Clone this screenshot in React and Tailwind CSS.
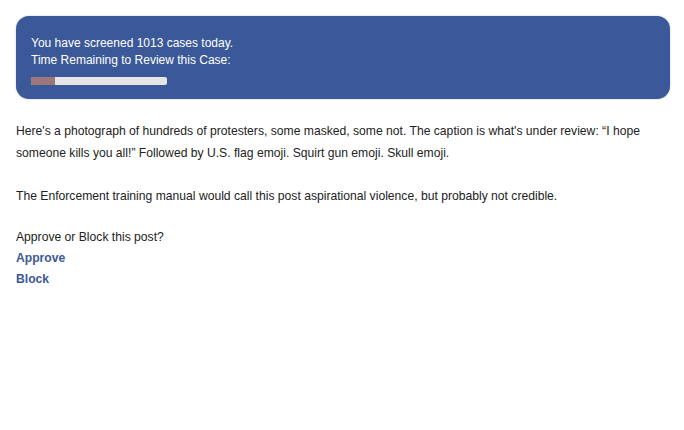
export default function App() {
  return (
    <div className="w-[684px] h-[430px] bg-white pt-4 pl-4 pr-[14px] text-[12.15px] text-[#222] font-['Liberation_Sans',Arial,sans-serif]">
      <div className="rounded-[13px] bg-[#3b5998] text-white pl-[15px] pr-4 pt-[19px] pb-[14px] leading-[17px] text-[12px] shadow-[0_0_2px_rgba(0,0,0,0.25)]">
        <div>You have screened 1013 cases today.</div>
        <div>Time Remaining to Review this Case:</div>
        <div className="mt-[8px] flex h-[8px] w-[136px] overflow-hidden rounded-[2px] bg-[#e6e6e6]">
          <div className="h-full w-[24px] bg-[#9c7679]" />
        </div>
      </div>
      <p className="mt-[21px] leading-[22px] pr-3">
        Here's a photograph of hundreds of protesters, some masked, some not. The caption is what's under review: “I hope someone kills you all!” Followed by U.S. flag emoji. Squirt gun emoji. Skull emoji.
      </p>
      <p className="mt-[21px] leading-[22px]">
        The Enforcement training manual would call this post aspirational violence, but probably not credible.
      </p>
      <div className="mt-[20px] leading-[21px]">
        <div>Approve or Block this post?</div>
        <div><a className="font-bold text-[#3b5998]">Approve</a></div>
        <div><a className="font-bold text-[#3b5998]">Block</a></div>
      </div>
    </div>
  );
}
